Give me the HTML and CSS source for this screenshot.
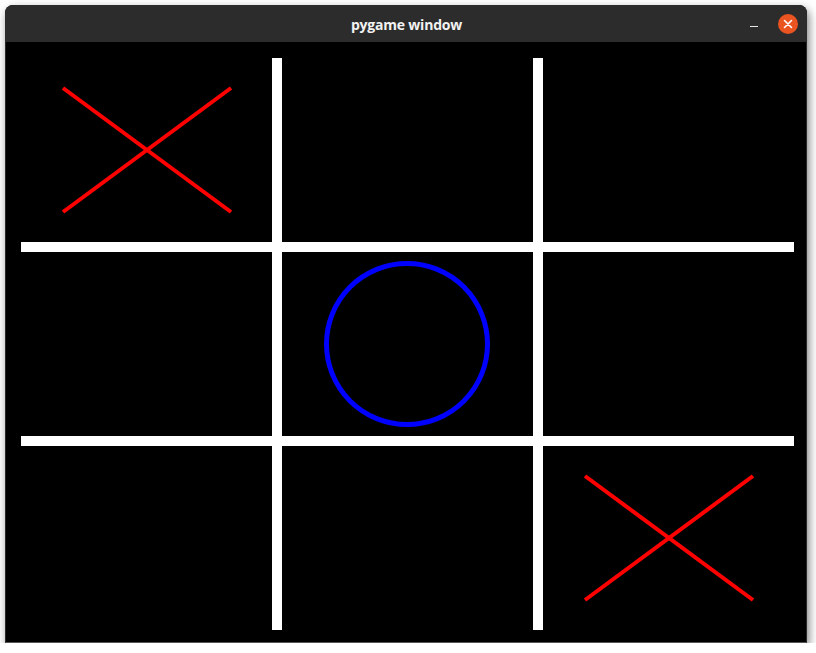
FILE: index.html
```html
<!DOCTYPE html>
<html>
<head>
<meta charset="utf-8">
<link rel="stylesheet" href="styles.css">
</head>
<body>
<div class="window">
  <div class="titlebar">
    <div class="spacer"></div>
    <div class="title">pygame window</div>
    <div class="controls">
      <span class="minimize"></span>
      <span class="close">
        <svg width="20" height="20" viewBox="0 0 20 20"><path d="M6.5 6.5 L13.5 13.5 M13.5 6.5 L6.5 13.5" stroke="#fff" stroke-width="1.6" stroke-linecap="round"/></svg>
      </span>
    </div>
  </div>
  <svg class="canvas" width="800" height="600" viewBox="0 0 800 600">
    <rect x="0" y="0" width="800" height="600" fill="#000"/>
    <rect x="266" y="16" width="10" height="572" fill="#fff"/>
    <rect x="527" y="16" width="10" height="572" fill="#fff"/>
    <rect x="15" y="200" width="773" height="10" fill="#fff"/>
    <rect x="15" y="394" width="773" height="10" fill="#fff"/>
    <circle cx="401" cy="302" r="80.5" fill="none" stroke="#0000ff" stroke-width="5"/>
    <g stroke="#ff0000" stroke-width="4">
      <line x1="57" y1="46" x2="225" y2="170"/>
      <line x1="57" y1="170" x2="225" y2="46"/>
      <line x1="579" y1="434" x2="747" y2="558"/>
      <line x1="579" y1="558" x2="747" y2="434"/>
    </g>
  </svg>
</div>
</body>
</html>
```

FILE: styles.css
```css
html, body {
  margin: 0;
  padding: 0;
  background: #ffffff;
}
body {
  padding: 5px 0 0 5px;
}
.window {
  width: 802px;
  display: flex;
  flex-direction: column;
  border-radius: 8px 8px 0 0;
  box-shadow: 2px 4px 10px rgba(0, 0, 0, 0.5);
  background: #000;
}
.titlebar {
  height: 37px;
  background: #2c2c2c;
  border-radius: 8px 8px 0 0;
  display: grid;
  grid-template-columns: 1fr auto 1fr;
  align-items: center;
}
.title {
  color: #f2f2f2;
  font-family: "Open Sans", "DejaVu Sans", sans-serif;
  font-weight: 700;
  font-size: 14px;
  letter-spacing: -0.2px;
  padding-left: 1px;
  padding-top: 2px;
}
.controls {
  display: flex;
  justify-content: flex-end;
  align-items: center;
  padding-right: 9px;
  gap: 20px;
}
.minimize {
  width: 8px;
  height: 1px;
  background: #e8e8e8;
  margin-top: 5px;
}
.close {
  width: 20px;
  height: 20px;
  border-radius: 50%;
  background: #e95420;
  display: flex;
}
.canvas {
  display: block;
  border-left: 1px solid #2a2a2a;
  border-right: 1px solid #2a2a2a;
  border-bottom: 1px solid #555;
  width: 800px;
  height: 600px;
}
```
